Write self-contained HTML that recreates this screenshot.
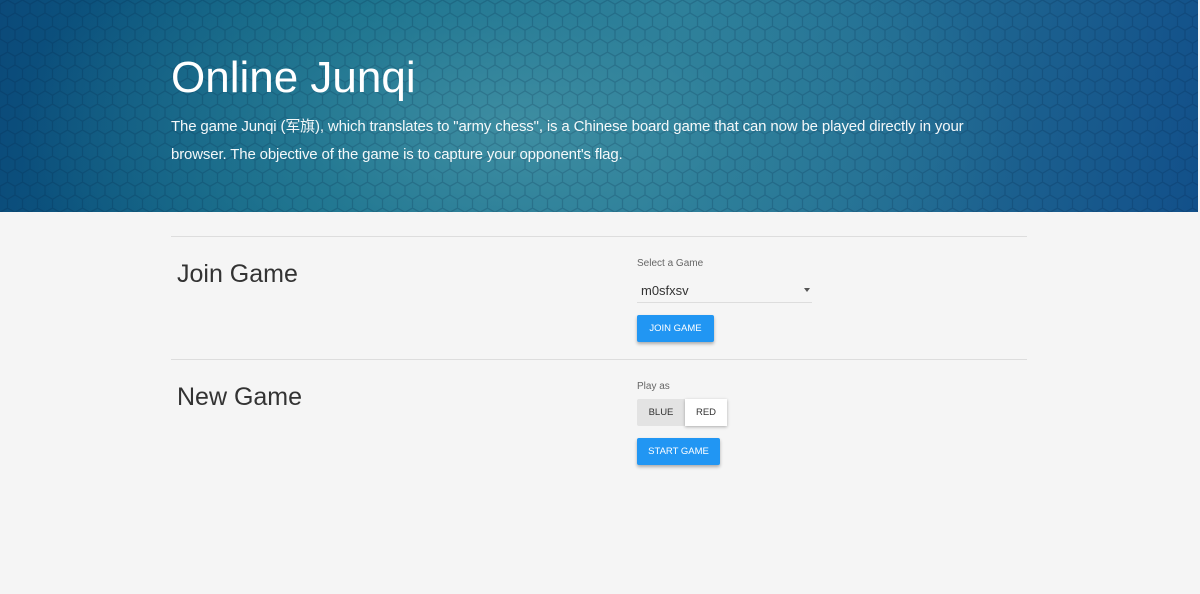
<!DOCTYPE html>
<html><head><meta charset="utf-8"><style>
*{margin:0;padding:0;box-sizing:border-box}
body{width:1200px;height:594px;background:#f5f5f5;font-family:"Liberation Sans","Noto Sans CJK SC",sans-serif;overflow:hidden;position:relative}
.hero{position:absolute;left:0;top:0;width:1198px;height:212px;background:radial-gradient(ellipse 500px 260px at 520px 130px,#3f8ea2 0%,rgba(50,130,155,0.6) 45%,rgba(0,0,0,0) 100%),linear-gradient(100deg,#0b4a7a 0%,#0d6a85 30%,#2a7f9a 55%,#1b5f8e 85%,#12508a 100%);overflow:hidden}
.hero svg{position:absolute;left:0;top:0}
h1{position:absolute;left:171px;top:53px;color:#fff;font-weight:normal;font-size:44px}
.desc{position:absolute;left:171px;top:113px;width:830px;color:#fff;font-size:15px;letter-spacing:-0.15px;line-height:28px;opacity:.95}
.hr{position:absolute;left:171px;width:856px;height:1px;background:#ddd}
.h2{position:absolute;left:177px;font-size:25px;color:#333}
.lbl{position:absolute;left:637px;font-size:10px;color:#666}
.btn{position:absolute;left:637px;background:#2196f3;color:#fff;font-size:9.5px;height:27px;line-height:27px;text-align:center;border-radius:2px;box-shadow:0 2px 3px rgba(0,0,0,.3)}
</style></head><body>
<div class="hero">
<svg width="1198" height="212"><defs><pattern id="h" width="15" height="26" patternUnits="userSpaceOnUse"><path d="M0 4.3 L7.5 0 L15 4.3 M7.5 0 L7.5 -1 M0 4.3 L0 12.9 L7.5 17.3 L15 12.9 L15 4.3 M7.5 17.3 L7.5 26" fill="none" stroke="rgba(0,25,60,0.18)" stroke-width="1.3"/></pattern></defs><rect width="1198" height="212" fill="url(#h)"/></svg>
<h1>Online Junqi</h1>
<div class="desc">The game Junqi (军旗), which translates to "army chess", is a Chinese board game that can now be played directly in your browser. The objective of the game is to capture your opponent's flag.</div>
</div>
<div class="hr" style="top:236px"></div>
<div class="h2" style="top:260px">Join Game</div>
<div class="lbl" style="top:258px">Select a Game</div>
<div style="position:absolute;left:641px;top:283px;font-size:13px;color:#333">m0sfxsv</div>
<div style="position:absolute;left:804px;top:288px;width:0;height:0;border-left:3px solid transparent;border-right:3px solid transparent;border-top:4px solid #555"></div>
<div style="position:absolute;left:637px;top:302px;width:175px;height:1px;background:#ddd"></div>
<div class="btn" style="top:315px;width:77px">JOIN GAME</div>
<div class="hr" style="top:359px"></div>
<div class="h2" style="top:383px">New Game</div>
<div class="lbl" style="top:381px">Play as</div>
<div style="position:absolute;left:637px;top:399px;width:48px;height:27px;line-height:27px;background:#e3e3e3;font-size:9.5px;text-align:center;color:#333;border-radius:2px 0 0 2px">BLUE</div>
<div style="position:absolute;left:685px;top:399px;width:42px;height:27px;line-height:27px;background:#fff;font-size:9.5px;text-align:center;color:#333;box-shadow:0 1px 3px rgba(0,0,0,.3)">RED</div>
<div class="btn" style="top:438px;width:83px">START GAME</div>
</body></html>
